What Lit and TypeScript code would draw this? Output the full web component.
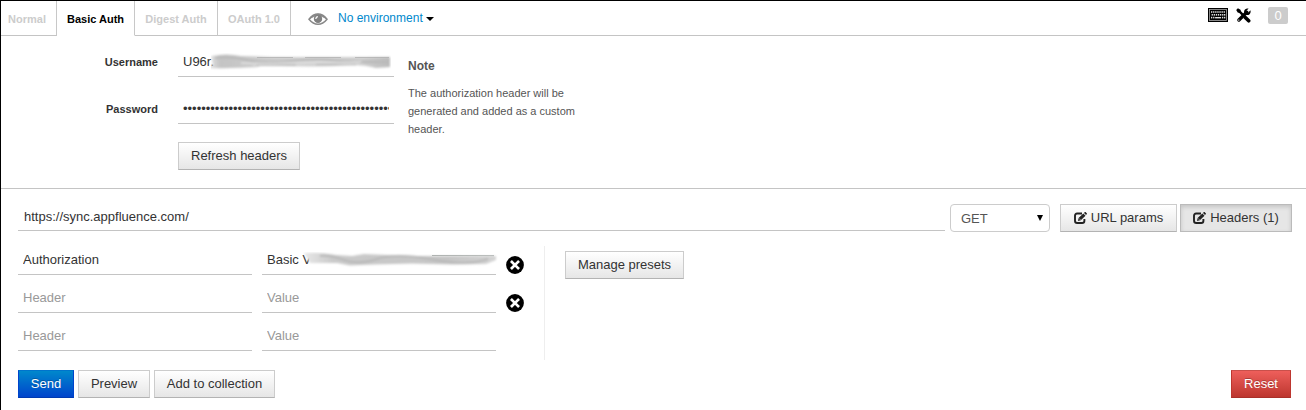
import { LitElement, html, css, svg } from "lit";
import { customElement, property } from "lit/decorators.js";

const editIcon = html`<svg class="edit" width="13" height="12" viewBox="0 0 13 12">
  <path d="M8 1.5H3.2Q1 1.5 1 3.7v5Q1 11 3.2 11h5Q10.4 11 10.4 8.7V7" fill="none" stroke="#222" stroke-width="1.9" />
  <path d="M4 9l.6-2.9L9.3 1.6l2.2 2.1L6.8 8.3zM10 1l.9-.9q.3-.3.7 0l1.3 1.3q.3.3 0 .7L12 3z" fill="#222" />
  <path d="M5.3 6.6l1.1 1.1" stroke="#eee" stroke-width=".8" />
</svg>`;

const eyeIcon = html`<svg width="20" height="12" viewBox="0 0 20 12">
  <path d="M1 6.2Q5 1 10 1t9 5.2Q15 11.2 10 11.2T1 6.2z" fill="#fff" stroke="#888" stroke-width="1.5" />
  <path d="M2 5.500Q6 1 10 1t8 4.500Q14 2.800 10 2.800T2 5.500z" fill="#888" stroke="#888" stroke-width=".8" />
  <circle cx="10" cy="5.900" r="4.200" fill="#808080" />
  <path d="M7.800 6Q7.900 3.900 9.900 3.700" fill="none" stroke="#fff" stroke-width="1.200" />
</svg>`;

const keyRow = (y: number, xs: number[]) => xs.map((x) => svg`<rect x=${x} y=${y} width="1.3" height="1.6" fill="#ddd" />`);

const keyboardIcon = html`<svg width="20" height="14" viewBox="0 0 20 14">
  <rect width="20" height="14" fill="#000" />
  <rect x="1.500" y="1.500" width="17" height="11" fill="none" stroke="#aaa" stroke-width=".8" />
  ${keyRow(3.2, [3, 5.1, 7.2, 9.3, 11.4, 13.5, 15.6])}
  ${keyRow(6, [3.6, 5.7, 7.8, 9.9, 12, 14.1, 16])}
  ${keyRow(8.8, [3, 5.1, 14, 16])}
  <rect x="7.100" y="9" width="6" height="1.400" fill="#ddd" />
</svg>`;

const toolsIcon = html`<svg width="15" height="15" viewBox="0 0 15 15">
  <path d="M2.900 12L10.800 4.300" stroke="#000" stroke-width="3.400" stroke-linecap="round" />
  <path d="M12.600.5L10.500 2.700l.3 1.500 1.500.3L14.400 2.300Q15.100 4.700 13.600 6.200 12 7.500 10.100 6.800L8.200 4.900Q7.700 2.900 9 1.500 10.500 0 12.600.5z" fill="#000" />
  <circle cx="2.800" cy="12.100" r=".7" fill="#fff" />
  <path d="M.2 1.900L1.900.3 4.500 1.800l.5 1.500 3.200 3.300-1.700 1.600L3.300 5.100 1.700 4.600z" fill="#000" />
  <path d="M9.300 9.400l3.400 3.400" stroke="#000" stroke-width="3.600" stroke-linecap="round" />
</svg>`;

const removeIcon = html`<svg width="18" height="18" viewBox="0 0 18 18">
  <circle cx="9" cy="9" r="8.900" fill="#000" />
  <path d="M5.900 5.900l6.200 6.200M12.100 5.900l-6.200 6.200" stroke="#fff" stroke-width="2.700" stroke-linecap="square" />
</svg>`;

const userSmudge = html`<svg class="smudge user" width="180" height="20" viewBox="0 0 180 20">
  <defs>
    <linearGradient id="u" x2="1"><stop offset="0" stop-color="#ddd" stop-opacity=".6" /><stop offset=".08" stop-color="#c4c4c4" /><stop offset=".5" stop-color="#d0d0d0" /><stop offset=".85" stop-color="#cecece" /><stop offset="1" stop-color="#bbb" /></linearGradient>
    <filter id="ub" x="-5%" y="-40%" width="110%" height="180%"><feGaussianBlur stdDeviation="1" /></filter>
  </defs>
  <g filter="url(#ub)">
    <path d="M0 3Q16 0 30 3L60 4 120 4 179 4V14L165 15Q150 11 130 12.500T70 13 45 13 20 15 2 12z" fill="url(#u)" />
    <path d="M4 5Q20 3 36 7T80 8 120 7 178 9" fill="none" stroke="#b8b8b8" stroke-width="2" />
    <path d="M45 12H85M105 11.500H145" fill="none" stroke="#b8b8b8" stroke-width="1.500" />
    <path d="M30 10Q50 11 75 10T125 9.500 150 8" fill="none" stroke="#e2e2e2" stroke-width="1.600" />
  </g>
  <path d="M46 4.500H82M94 4.500H130M144 4.500H178" stroke="#aaa" stroke-width=".7" />
</svg>`;

const valueSmudge = html`<svg class="smudge value" width="196" height="18" viewBox="0 0 196 18">
  <defs>
    <linearGradient id="v" x2="1"><stop offset="0" stop-color="#e8e8e8" /><stop offset=".15" stop-color="#cacaca" /><stop offset=".75" stop-color="#c6c6c6" /><stop offset="1" stop-color="#d4d4d4" /></linearGradient>
    <filter id="vb" x="-5%" y="-40%" width="110%" height="180%"><feGaussianBlur stdDeviation="1" /></filter>
  </defs>
  <g filter="url(#vb)">
    <path d="M2 1Q18 0 34 3L50 4 62 2 85 3 110 4 194 4V8L184 12 150 12.500 110 11.500 72 12.500 48 13.500 35 11 8 11z" fill="url(#v)" />
    <path d="M18 4Q28 3 42 8T75 7 130 7.500 186 7" fill="none" stroke="#b8b8b8" stroke-width="2" />
  </g>
  <path d="M130 3.500L192 3.700" stroke="#a0a5a2" stroke-width=".8" />
</svg>`;

const base = css`
  * { box-sizing: border-box; }
  input {
    display: block; width: 100%; height: 28px; margin: 0; padding: 0 5px 2px; border: 0;
    border-bottom: 1px solid #c4c4c4; border-radius: 0; outline: 0; background: none;
    font: 13px "Liberation Sans", Arial, sans-serif; color: #333;
  }
  input::placeholder { color: #999; opacity: 1; }
  .btn {
    height: 28px; margin: 0; padding: 0 12px; border: 1px solid #ccc; border-bottom-color: #b3b3b3; border-radius: 0;
    background: linear-gradient(#fff, #e6e6e6); color: #333; white-space: nowrap;
    display: flex; align-items: center; justify-content: center; gap: 4px;
    font: 13px/18px "Liberation Sans", Arial, sans-serif;
  }
  .btn.active { background: #e6e6e6; border-color: #bbb; box-shadow: inset 0 2px 4px rgba(0,0,0,.15); }
  .btn.primary { color: #fff; background: linear-gradient(#08c, #04c); border-color: #0074cc #04c #003ab0; text-shadow: 0 -1px 0 rgba(0,0,0,.25); }
  .btn.danger { color: #fff; background: linear-gradient(#ee5f5b, #bd362f); border-color: #c9504b #bd362f #a9302a; text-shadow: 0 -1px 0 rgba(0,0,0,.25); }
`;

@customElement("auth-bar")
class AuthBar extends LitElement {
  static styles = [base, css`
    :host { display: flex; height: 35px; border-bottom: 1px solid #c4c4c4; }
    .tab { height: 35px; padding-top: 2px; border-right: 1px solid #c8c8c8; border-bottom: 1px solid #c4c4c4; color: #ccc; font-size: 11px; font-weight: bold; display: flex; align-items: center; justify-content: center; white-space: nowrap; }
    .normal { width: 56px; padding-right: 3px; }
    .basic { width: 78px; color: #000; border-bottom-color: #fff; }
    .digest { width: 83px; }
    .oauth { width: 73px; }
    .env { display: flex; align-items: center; padding: 0 0 1px 17px; font-size: 12px; color: #0088cc; }
    .env span { margin-left: 10px; }
    .env svg { margin-top: 2px; }
    .caret { margin: 3px 0 0 3px; border: 4px solid transparent; border-top-color: #000; border-bottom: 0; }
    .tools { margin-left: auto; padding: 7px 18px 0 0; display: flex; align-items: flex-start; }
    .wrench { margin: 0 1px 0 8px; height: 15px; }
    .badge { width: 20px; height: 17px; margin: -1px 0 0 16px; background: #ccc; border-radius: 2px; color: #fff; font-size: 13px; line-height: 18px; text-align: center; }
  `];
  render() {
    return html`
      <div class="tab normal">Normal</div>
      <div class="tab basic">Basic Auth</div>
      <div class="tab digest">Digest Auth</div>
      <div class="tab oauth">OAuth 1.0</div>
      <div class="env">${eyeIcon}<span>No environment</span><i class="caret"></i></div>
      <div class="tools">${keyboardIcon}<div class="wrench">${toolsIcon}</div><div class="badge">0</div></div>`;
  }
}

@customElement("header-row")
class HeaderRow extends LitElement {
  @property() name = "";
  @property() value = "";
  @property({ type: Boolean }) removable = false;
  @property({ type: Boolean }) masked = false;
  static styles = [base, css`
    :host { display: grid; grid-template-columns: 234px 234px 18px; column-gap: 10px; height: 38px; }
    .field { position: relative; }
    .smudge { position: absolute; left: 40px; top: 5px; }
    .remove { padding-top: 9px; height: 28px; }
  `];
  render() {
    return html`
      <div class="field"><input placeholder="Header" .value=${this.name} /></div>
      <div class="field"><input placeholder="Value" .value=${this.value} />${this.masked ? valueSmudge : null}</div>
      ${this.removable ? html`<div class="remove">${removeIcon}</div>` : null}`;
  }
}

@customElement("app-root")
class AppRoot extends LitElement {
  static styles = [base, css`
    :host { display: block; height: 410px; border: solid #000; border-width: 1px 0 0 1px; background: #fff; color: #333; font: 13px "Liberation Sans", Arial, sans-serif; overflow: hidden; }
    .auth { display: flex; height: 153px; border-bottom: 1px solid #c4c4c4; padding-top: 13px; }
    .form { display: grid; grid-template-columns: 157px 216px; column-gap: 20px; grid-template-rows: 47px 47px 28px; justify-items: start; padding-bottom: 17px; }
    label { justify-self: end; font-size: 11px; font-weight: bold; line-height: 26px; }
    .field { position: relative; width: 216px; }
    .smudge { position: absolute; left: 33px; top: 4px; }
    .form .refresh { grid-column: 2; margin-top: -1px; }
    .note { width: 190px; margin-left: 14px; color: #555; font-size: 11px; line-height: 18px; }
    .note h4 { margin: 8px 0 9px; font-size: 12px; line-height: 18px; }
    .note p { margin: 0; }
    .url { display: flex; height: 57px; padding: 15px 14px 0 17px; }
    .address { width: 927px; margin-top: -1px; }
    .address input { padding: 0 6px; }
    .method { width: 100px; height: 28px; margin: 0 10px 0 5px; padding: 0 6px 0 10px; border: 1px solid #ccc; border-radius: 4px; color: #555; display: flex; align-items: center; justify-content: space-between; }
    .arrow { border: 3.5px solid transparent; border-top: 6px solid #000; border-bottom: 0; }
    .url .params { width: 117px; margin-right: 3px; padding: 0; }
    .url .count { width: 112px; padding: 0; }
    .headers { display: flex; height: 114px; padding-left: 17px; align-items: flex-start; }
    .rows { width: 527px; height: 114px; padding-top: 1px; border-right: 1px solid #eee; }
    .headers .presets { margin: 5px 0 0 20px; width: 119px; }
    .actions { display: flex; gap: 4px; padding: 10px 15px 0 17px; }
    .send { width: 56px; }
    .preview { width: 72px; }
    .add { width: 121px; }
    .actions .reset { width: 60px; margin-left: auto; }
  `];
  render() {
    return html`
      <auth-bar></auth-bar>
      <section class="auth">
        <div class="form">
          <label>Username</label>
          <div class="field"><input .value=${"U96r."} />${userSmudge}</div>
          <label>Password</label>
          <div class="field"><input type="password" .value=${"x".repeat(60)} /></div>
          <button class="btn refresh">Refresh headers</button>
        </div>
        <div class="note"><h4>Note</h4><p>The authorization header will be generated and added as a custom header.</p></div>
      </section>
      <section class="url">
        <div class="address"><input .value=${"https://sync.appfluence.com/"} /></div>
        <div class="method">GET<i class="arrow"></i></div>
        <button class="btn params">${editIcon}URL params</button>
        <button class="btn active count">${editIcon}Headers (1)</button>
      </section>
      <section class="headers">
        <div class="rows">
          <header-row name="Authorization" value="Basic V" removable masked></header-row>
          <header-row removable></header-row>
          <header-row></header-row>
        </div>
        <button class="btn presets">Manage presets</button>
      </section>
      <footer class="actions">
        <button class="btn primary send">Send</button>
        <button class="btn preview">Preview</button>
        <button class="btn add">Add to collection</button>
        <button class="btn danger reset">Reset</button>
      </footer>`;
  }
}
